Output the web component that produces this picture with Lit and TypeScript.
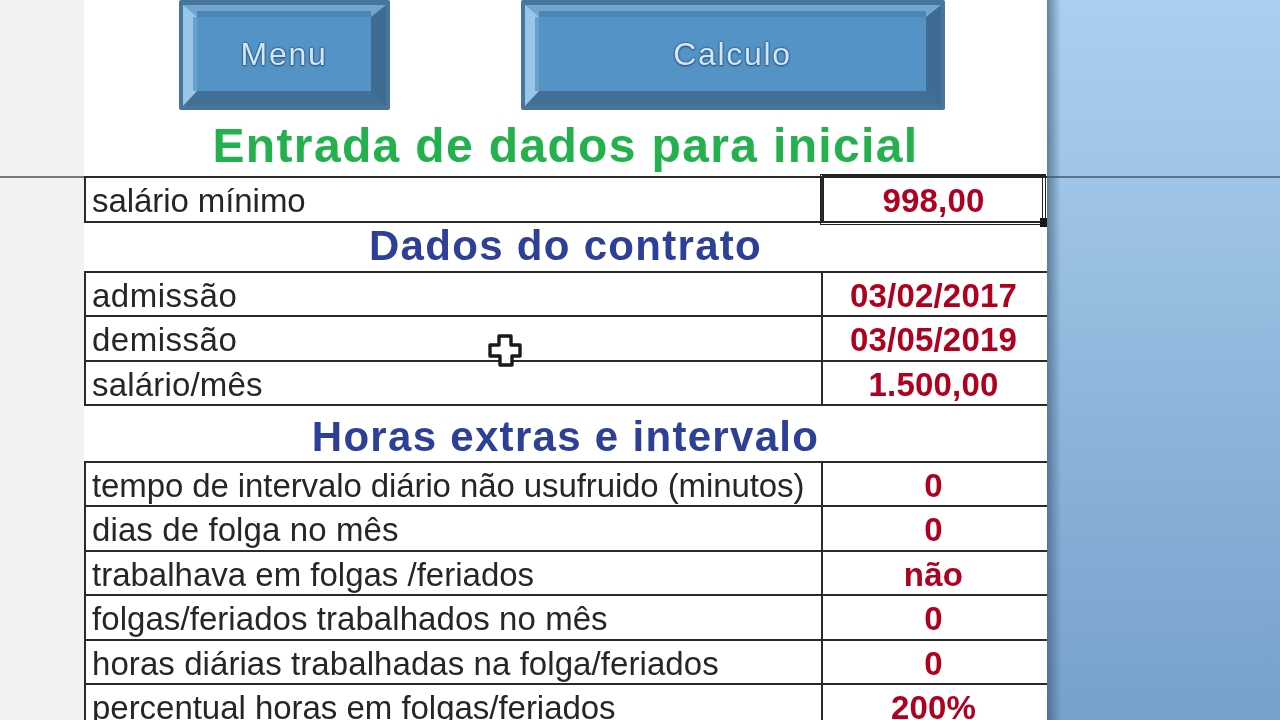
import { LitElement, html, css } from "lit";
import { customElement } from "lit/decorators.js";
import { styleMap } from "lit/directives/style-map.js";

type Row = [string, string, number];

@customElement("app-root")
export class AppRoot extends LitElement {
  static styles = css`
    :host { display: block; width: 1280px; height: 720px; overflow: hidden; font-family: "Liberation Sans", Arial, sans-serif; position: relative; }
    .page { display: flex; width: 1280px; height: 720px; overflow: hidden; filter: blur(.4px); }
    .gutter { width: 84px; flex: none; background: #f2f2f2; }
    .gutter .top, .side .top { height: 176px; border-bottom: 2px solid #777; box-sizing: content-box; }
    .sheet { width: 963px; flex: none; background: #fff; display: flex; flex-direction: column; }
    .side { flex: 1; background: linear-gradient(180deg, #a9d0f0 0%, #9cc3e5 30%, #8ab3d8 62%, #76a1cb 100%); position: relative; }
    .side .top { border-bottom-color: #5d7488; }
    .side::before { content: ""; position: absolute; inset: 0 auto 0 0; width: 14px; background: linear-gradient(90deg, rgba(50,80,110,.6), rgba(50,80,110,0)); }
    .buttons { height: 110px; display: flex; flex: none; padding-left: 95px; gap: 131px; }
    .btn { background: #47759c; padding: 5px 4px 4px; box-sizing: border-box; height: 110px; border-radius: 2px; }
    .btn.menu { width: 211px; }
    .btn.calc { width: 424px; }
    .bevel { box-sizing: border-box; height: 100%; display: flex; border-style: solid; border-width: 12px 15px 15px 14px;
      border-top-color: #72a6cf; border-left-color: #98c6e8; border-right-color: #3f6c93; border-bottom-color: #436f97; }
    .face { flex: 1; background: #5493c5; display: flex; align-items: center; justify-content: center;
      box-shadow: -4px 0 0 #6aa0c8, 0 -6px 0 #4d86b2; }
    .label { font-size: 32px; letter-spacing: 1.7px; color: #d2e6f5; margin-top: 1px; text-shadow: 0 0 2px #255580, 0 0 2px #255580, 0 1px 2px #255580; }
    h1, h2 { margin: 0; text-align: center; font-weight: 700; flex: none; }
    h1 { height: 67px; line-height: 71px; font-size: 48px; letter-spacing: 1.35px; color: #22b14c; width: 963px; }
    h2 { color: #2e3f98; font-size: 42px; letter-spacing: 1.3px; }
    .h-a { height: 49.4px; line-height: 46px; }
    .h-b { height: 55.6px; line-height: 62px; }
    .tbl { flex: none; border-top: 2px solid #2a2a2a; margin-top: -1px; }
    .row { display: flex; height: 42.5px; border-bottom: 2px solid #2a2a2a; border-left: 2px solid #2a2a2a; }
    .k { width: 729px; flex: none; border-right: 2px solid #2a2a2a; padding-left: 6px; font-size: 33px; line-height: 45px; color: #262626; white-space: nowrap; }
    .v { flex: 1; padding-right: 3px; text-align: center; font-size: 33px; letter-spacing: .2px; line-height: 45px; font-weight: 700; color: #b00020; white-space: nowrap; }
    .sel { position: relative; }
    .sel::after { content: ""; position: absolute; left: -3px; top: -4px; right: 1px; bottom: -4px; border: 4px double #222; border-top: 4px solid #222; pointer-events: none; }
    .handle { position: absolute; right: 0; bottom: -6px; width: 7px; height: 9px; background: #111; }
    .cursor { position: absolute; left: 488px; top: 334px; width: 34px; height: 34px; overflow: visible; }
  `;

  private key(k: string, tracking: number) {
    return html`<div class="k" style=${styleMap({ letterSpacing: `${tracking}px` })}>${k}</div>`;
  }

  private renderRows(rows: Row[]) {
    return rows.map(([k, v, t]) => html`<div class="row">${this.key(k, t)}<div class="v">${v}</div></div>`);
  }

  render() {
    return html`
      <div class="page">
        <div class="gutter"><div class="top"></div></div>
        <div class="sheet">
          <div class="buttons">
            <div class="btn menu"><div class="bevel"><div class="face"><span class="label">Menu</span></div></div></div>
            <div class="btn calc"><div class="bevel"><div class="face"><span class="label">Calculo</span></div></div></div>
          </div>
          <h1>Entrada de dados para inicial</h1>
          <div class="tbl">
            <div class="row">${this.key("salário mínimo", -0.07)}<div class="v sel">998,00<span class="handle"></span></div></div>
          </div>
          <h2 class="h-a">Dados do contrato</h2>
          <div class="tbl">
            ${this.renderRows([
              ["admissão", "03/02/2017", 0.5],
              ["demissão", "03/05/2019", 0.5],
              ["salário/mês", "1.500,00", 0.18],
            ])}
          </div>
          <h2 class="h-b">Horas extras e intervalo</h2>
          <div class="tbl">
            ${this.renderRows([
              ["tempo de intervalo diário não usufruido (minutos)", "0", -0.1],
              ["dias de folga no mês", "0", 0.1],
              ["trabalhava em folgas /feriados", "não", 0],
              ["folgas/feriados trabalhados no mês", "0", 0.06],
              ["horas diárias trabalhadas na folga/feriados", "0", 0.07],
              ["percentual horas em folgas/feriados", "200%", -0.03],
            ])}
          </div>
        </div>
        <div class="side"><div class="top"></div></div>
      </div>
      <svg class="cursor" viewBox="0 0 34 34" aria-hidden="true">
        <path d="M11 2H23V11H32V22H24V31H12V22H2V11H11Z" fill="#fff" stroke="#1a1a1a" stroke-width="3.4" stroke-linejoin="round"/>
      </svg>
    `;
  }
}
